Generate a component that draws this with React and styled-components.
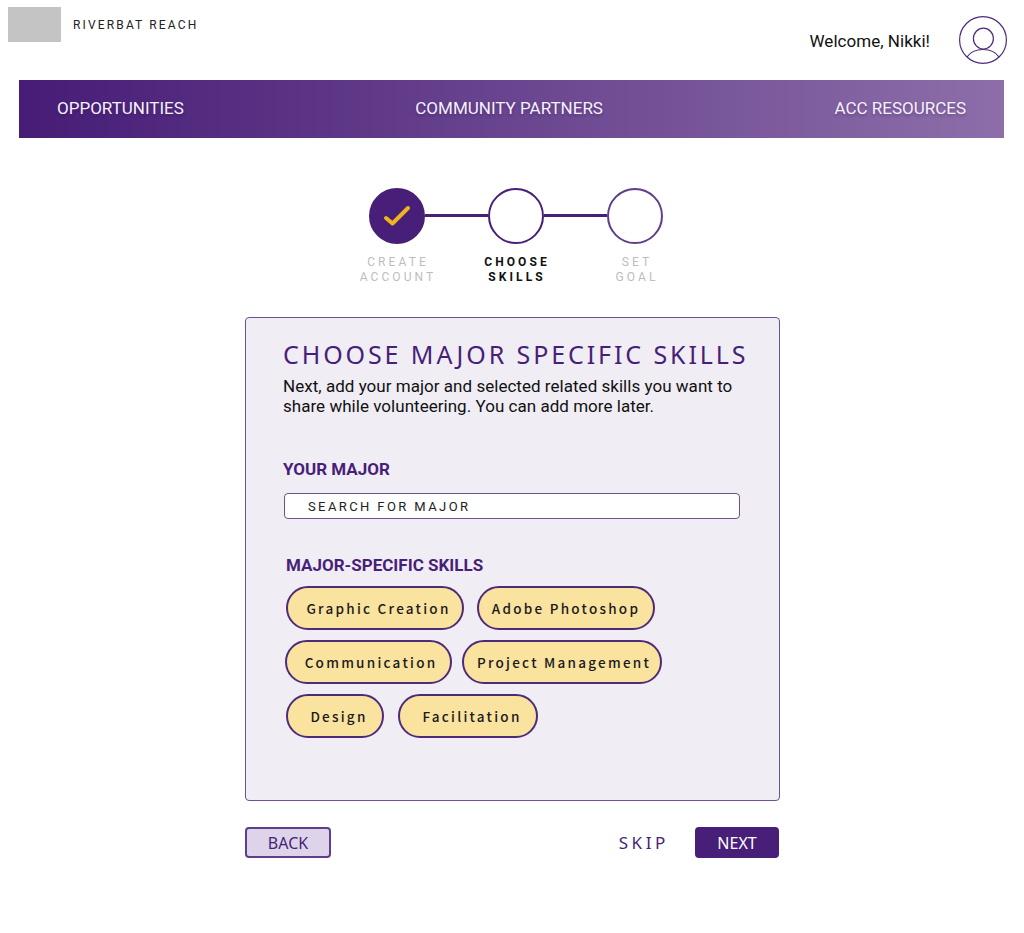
import React from 'react'
import styled, { createGlobalStyle } from 'styled-components'

const purple = '#481f78'

const GlobalStyle = createGlobalStyle`
  html, body { margin: 0; padding: 0; background: #fff; }
  body { font-family: Roboto, "Liberation Sans", sans-serif; }
`

const Page = styled.div`
  width: 1024px;
  height: 933px;
  overflow: hidden;
`

const Header = styled.header`
  height: 80px;
  display: flex;
  justify-content: space-between;
  box-sizing: border-box;
  padding: 7px 17px 0 8px;
`

const Brand = styled.div`
  display: flex;
  align-items: center;
  gap: 12px;
  height: 35px;
`

const Logo = styled.div`
  width: 53px;
  height: 35px;
  background: #c4c4c4;
`

const BrandName = styled.span`
  font-size: 12px;
  letter-spacing: 2.15px;
  color: #222;
`

const User = styled.div`
  display: flex;
  align-items: center;
  gap: 29px;
  height: 48px;
  margin-top: 9px;
  font-size: 17px;
  color: #111;
`

const Welcome = styled.span`
  margin-top: 2px;
  letter-spacing: 0.03px;
`

const Nav = styled.nav`
  margin: 0 20px 0 19px;
  height: 58px;
  padding: 0 38px;
  display: flex;
  align-items: center;
  justify-content: space-between;
  background: linear-gradient(90deg, #461c76 0%, #8d6ea9 100%);
`

const NavLink = styled.a`
  font-size: 17px;
  margin-bottom: 2px;
  color: #f6f0fb;
  text-shadow: 0 2px 3px rgba(40, 10, 70, 0.3);
`

const Stepper = styled.div`
  margin-top: 50px;
  margin-left: 369px;
  display: flex;
  align-items: center;
`

const Circle = styled.div`
  width: 56px;
  height: 56px;
  box-sizing: border-box;
  border-radius: 50%;
  border: 2px solid ${(p) => (p.$faint ? '#5f3f8b' : purple)};
  background: ${(p) => (p.$done ? purple : '#fff')};
  display: flex;
  align-items: center;
  justify-content: center;
`

const Line = styled.div`
  width: 63px;
  height: 3px;
  margin-bottom: 1px;
  background: ${purple};
`

const StepLabels = styled.div`
  margin: 11px 0 0 338px;
  display: flex;
`

const StepLabel = styled.div`
  width: ${(p) => p.$w}px;
  text-align: center;
  font-size: 12px;
  line-height: 15px;
  letter-spacing: 3.1px;
  font-weight: ${(p) => (p.$active ? 700 : 400)};
  color: ${(p) => (p.$active ? '#111' : '#bdbdbd')};
`

const Card = styled.section`
  box-sizing: border-box;
  width: 535px;
  height: 484px;
  margin: 32px 0 0 245px;
  padding: 20px 30px 0 37px;
  background: #f0edf5;
  border: 1px solid #6f4f96;
  border-radius: 4px;
`

const Title = styled.h1`
  margin: 0;
  font-family: "Noto Sans", "Open Sans", sans-serif;
  font-size: 25px;
  line-height: 33px;
  font-weight: 400;
  letter-spacing: 2.9px;
  white-space: nowrap;
  color: ${purple};
`

const Intro = styled.p`
  margin: 5px 0 0;
  font-size: 17px;
  line-height: 20px;
  letter-spacing: 0.03px;
  white-space: nowrap;
  color: #111;
`

const SectionLabel = styled.h2`
  margin: ${(p) => p.$top}px 0 0 ${(p) => p.$left || 0}px;
  font-size: 17px;
  line-height: 20px;
  font-weight: 700;
  color: ${purple};
`

const SearchBox = styled.div`
  box-sizing: border-box;
  width: 456px;
  height: 26px;
  margin: 14px 0 0 1px;
  padding-left: 23px;
  display: flex;
  align-items: center;
  background: #fff;
  border: 1px solid #6f4f96;
  border-radius: 4px;
  font-size: 13px;
  letter-spacing: 2.4px;
  color: #222;
`

const ChipRows = styled.div`
  margin-top: 11px;
  display: flex;
  flex-direction: column;
  gap: 10px;
`

const ChipRow = styled.div`
  display: flex;
  gap: ${(p) => p.$gap}px;
  margin-left: ${(p) => p.$left}px;
`

const Chip = styled.div`
  box-sizing: border-box;
  width: ${(p) => p.$w}px;
  height: 44px;
  padding-left: ${(p) => p.$shift}px;
  display: flex;
  align-items: center;
  justify-content: center;
  background: #fae29f;
  border: 2px solid #4d2a7a;
  border-radius: 22px;
  font-family: "Noto Sans CJK SC", "Noto Sans", sans-serif;
  font-size: 13.5px;
  font-weight: 500;
  letter-spacing: 2.25px;
  white-space: nowrap;
  color: #1a1a1a;
`

const Actions = styled.div`
  width: 534px;
  margin: 26px 0 0 245px;
  display: flex;
  align-items: center;
`

const Button = styled.button`
  box-sizing: border-box;
  height: 31px;
  width: ${(p) => (p.$primary ? 84 : 86)}px;
  padding: 0;
  background: ${(p) => (p.$primary ? purple : '#ddd4e9')};
  border: 2px solid ${(p) => (p.$primary ? purple : '#5f3f8b')};
  border-radius: 4px;
  font-family: "Noto Sans", "Open Sans", sans-serif;
  font-size: 16px;
  color: ${(p) => (p.$primary ? '#fff' : purple)};
`

const Skip = styled.span`
  margin-left: auto;
  margin-right: 26px;
  font-family: "Noto Sans", "Open Sans", sans-serif;
  font-size: 17px;
  letter-spacing: 3.6px;
  color: ${purple};
`

const Avatar = () => (
  <svg width="48" height="48" viewBox="0 0 48 48" fill="none" stroke="#4d2a7a" strokeWidth="1.2">
    <circle cx="24" cy="24" r="23.4" />
    <ellipse cx="24.4" cy="22.6" rx="10" ry="10.4" />
    <path d="M8 41 C11 36.5 17 33.5 24 33.5 C31 33.5 37 36.5 40 41" />
  </svg>
)

const Check = () => (
  <svg width="28" height="22" viewBox="0 0 28 22" fill="none" stroke="#f0b41c" strokeWidth="4" strokeLinecap="round" strokeLinejoin="round">
    <path d="M3 13 L9.5 18.5 L25 3" />
  </svg>
)

const skillRows = [
  { left: 3, gap: 13, chips: [['Graphic Creation', 178, 7], ['Adobe Photoshop', 178, 0]] },
  { left: 2, gap: 10, chips: [['Communication', 167, 5], ['Project Management', 200, 4]] },
  { left: 3, gap: 14, chips: [['Design', 98, 8], ['Facilitation', 140, 8]] },
]

const App = () => {
  return (
    <Page>
      <GlobalStyle />
      <Header>
        <Brand>
          <Logo />
          <BrandName>RIVERBAT REACH</BrandName>
        </Brand>
        <User>
          <Welcome>Welcome, Nikki!</Welcome>
          <Avatar />
        </User>
      </Header>
      <Nav>
        <NavLink>OPPORTUNITIES</NavLink>
        <NavLink>COMMUNITY PARTNERS</NavLink>
        <NavLink>ACC RESOURCES</NavLink>
      </Nav>
      <Stepper>
        <Circle $done><Check /></Circle>
        <Line />
        <Circle />
        <Line />
        <Circle $faint />
      </Stepper>
      <StepLabels>
        <StepLabel $w={120}>CREATE<br />ACCOUNT</StepLabel>
        <StepLabel $w={118} $active>CHOOSE<br />SKILLS</StepLabel>
        <StepLabel $w={122}>SET<br />GOAL</StepLabel>
      </StepLabels>
      <Card>
        <Title>CHOOSE MAJOR SPECIFIC SKILLS</Title>
        <Intro>
          Next, add your major and selected related skills you want to<br />
          share while volunteering. You can add more later.
        </Intro>
        <SectionLabel $top={43}>YOUR MAJOR</SectionLabel>
        <SearchBox>SEARCH FOR MAJOR</SearchBox>
        <SectionLabel $top={36} $left={3}>MAJOR-SPECIFIC SKILLS</SectionLabel>
        <ChipRows>
          {skillRows.map((row) => (
            <ChipRow key={row.chips[0][0]} $gap={row.gap} $left={row.left}>
              {row.chips.map(([name, w, shift]) => (
                <Chip key={name} $w={w} $shift={shift}>{name}</Chip>
              ))}
            </ChipRow>
          ))}
        </ChipRows>
      </Card>
      <Actions>
        <Button>BACK</Button>
        <Skip>SKIP</Skip>
        <Button $primary>NEXT</Button>
      </Actions>
    </Page>
  )
}

export default App
